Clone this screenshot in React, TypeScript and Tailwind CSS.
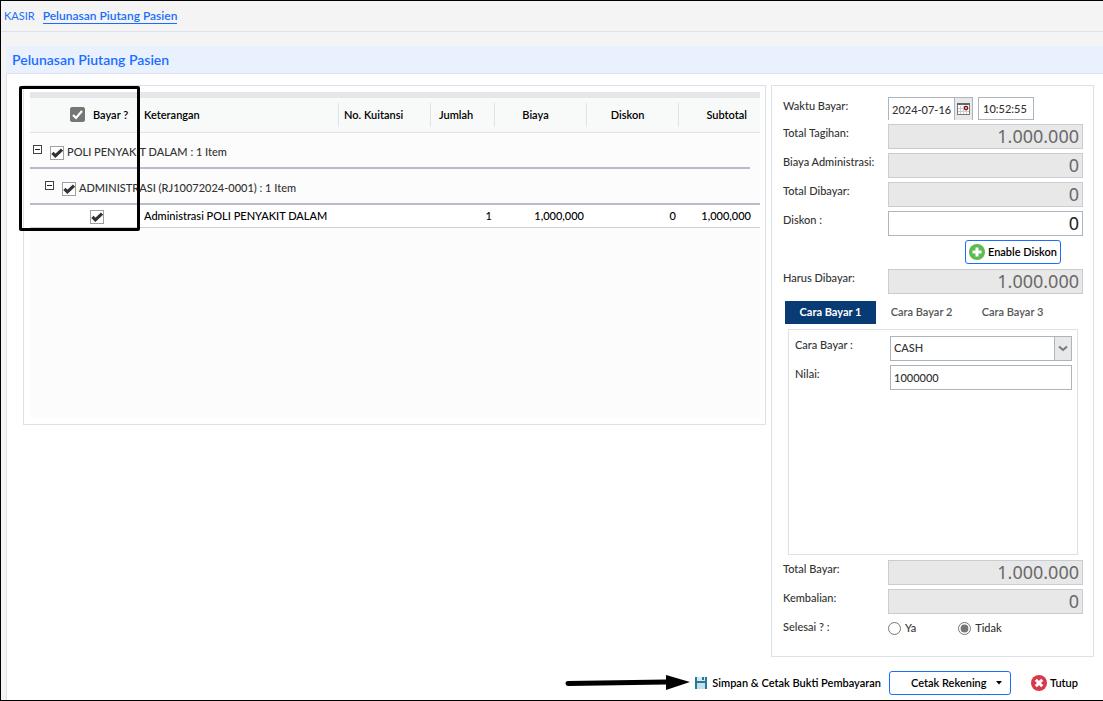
import type { ReactNode } from "react";

const totalsTop = [
  { id: "tagihan", label: "Total Tagihan:", value: "1.000.000" },
  { id: "admin", label: "Biaya Administrasi:", value: "0" },
  { id: "dibayar", label: "Total Dibayar:", value: "0" },
];

const totalsBottom = [
  { id: "bayar", label: "Total Bayar:", value: "1.000.000" },
  { id: "kembalian", label: "Kembalian:", value: "0" },
];

function GridCheckbox({ label }: { label: string }) {
  return (
    <span className="inline-grid size-[14px] shrink-0">
      <input
        type="checkbox"
        defaultChecked
        aria-label={label}
        className="peer size-[14px] appearance-none border border-[#a0a0a0] bg-white [grid-area:1/1]"
      />
      <svg viewBox="0 0 14 14" className="pointer-events-none hidden size-[14px] peer-checked:block [grid-area:1/1]">
        <path d="M2.4 6.8 5.4 9.8 12 3.6" fill="none" stroke="#333" strokeWidth="3.2" />
      </svg>
    </span>
  );
}

function HeaderCheckbox() {
  return (
    <span className="inline-grid size-[15px] shrink-0">
      <input
        id="bayar-semua"
        type="checkbox"
        defaultChecked
        className="peer size-[15px] appearance-none rounded-[2px] border border-[#767676] checked:bg-[#767676] [grid-area:1/1]"
      />
      <svg viewBox="0 0 15 15" className="pointer-events-none hidden size-[15px] peer-checked:block [grid-area:1/1]">
        <path d="M3 8 6 11 12 4" fill="none" stroke="#fff" strokeWidth="2.2" />
      </svg>
    </span>
  );
}

function CollapseButton() {
  return (
    <button type="button" aria-label="Tutup grup" className="mb-1.5 size-[9px] shrink-0">
      <svg viewBox="0 0 9 9" className="size-[9px]">
        <rect x="0.5" y="0.5" width="8" height="8" fill="#fff" stroke="#444" />
        <path d="M2 4.5h5" stroke="#222" />
      </svg>
    </button>
  );
}

function Row({ label, htmlFor, children }: { label: string; htmlFor?: string; children: ReactNode }) {
  return (
    <div className="flex items-start">
      <label htmlFor={htmlFor} className="w-[105px] shrink-0 leading-[18px] font-medium whitespace-nowrap">
        {label}
      </label>
      {children}
    </div>
  );
}

function TotalRow({ id, label, value }: { id: string; label: string; value: string }) {
  return (
    <Row label={label} htmlFor={id}>
      <input
        id={id}
        disabled
        defaultValue={value}
        className="h-[25px] min-w-0 flex-1 border border-[#c9cdd1] bg-[#e8e8e8] px-[3px] text-right font-['Noto_Sans',sans-serif] text-[18px] text-[#6a6a6a]"
      />
    </Row>
  );
}

function CalendarIcon() {
  return (
    <svg viewBox="0 0 13 12" className="h-3 w-[13px]">
      <rect x="0.5" y="0.5" width="12" height="11" fill="#fff" stroke="#777" />
      <path d="M0 1h13" stroke="#666" strokeWidth="2" />
      <path d="M1 5.5h11M1 8.5h11M3.5 3v8M6.5 3v8M9.5 3v8" stroke="#ccc" />
      <rect x="7.5" y="3.5" width="3" height="3" rx="1" fill="#fff" stroke="#8b0d18" strokeWidth="1.3" />
    </svg>
  );
}

function ItemTable() {
  return (
    <section className="min-w-0 flex-1 border border-[#dfe1ea] py-[6px] pr-[5px] pl-[6px]">
      <div className="h-[6px] bg-[#e5e6ea]" />
      <div className="min-h-[320px] bg-[#fcfcfc]">
        <table className="w-full table-fixed border-collapse text-black">
          <colgroup>
            <col className="w-[109px]" />
            <col />
            <col className="w-[92px]" />
            <col className="w-16" />
            <col className="w-[92px]" />
            <col className="w-[92px]" />
            <col className="w-[82px]" />
          </colgroup>
          <thead>
            <tr className="h-[34px] border-b border-[#dfe3ee] bg-[#f8faf9] whitespace-nowrap">
              <th className="p-0 pl-10 font-semibold">
                <span className="flex items-center gap-2">
                  <HeaderCheckbox />
                  <label htmlFor="bayar-semua">Bayar ?</label>
                </span>
              </th>
              <th className="p-0 pl-[5px] text-left font-semibold">Keterangan</th>
              <th className="p-0">
                <div className="flex h-6 items-center border-l border-[#dfe3ee] pl-[5px] font-semibold">No. Kuitansi</div>
              </th>
              <th className="p-0">
                <div className="flex h-6 items-center border-l border-[#dfe3ee] pl-2 font-semibold">Jumlah</div>
              </th>
              <th className="p-0">
                <div className="flex h-6 items-center justify-center border-l border-[#dfe3ee] pr-[10px] font-semibold">Biaya</div>
              </th>
              <th className="p-0">
                <div className="flex h-6 items-center justify-center border-l border-[#dfe3ee] pr-[10px] font-semibold">Diskon</div>
              </th>
              <th className="p-0">
                <div className="flex h-6 items-center justify-end border-l border-[#dfe3ee] pr-[13px] font-semibold">Subtotal</div>
              </th>
            </tr>
          </thead>
          <tbody>
            <tr>
              <td colSpan={7} className="p-0">
                <div className="mr-[10px] flex h-9 items-center gap-2 border-b-2 border-[#b8bec7] pt-1.5 pl-[3px]">
                  <CollapseButton />
                  <span className="flex items-center gap-[3px] font-medium text-[#333]">
                    <GridCheckbox label="POLI PENYAKIT DALAM" />
                    POLI PENYAKIT DALAM : 1 Item
                  </span>
                </div>
              </td>
            </tr>
            <tr>
              <td colSpan={7} className="p-0">
                <div className="flex h-9 items-center gap-2 border-b-2 border-[#b8bec7] pt-1.5 pl-[15px]">
                  <CollapseButton />
                  <span className="flex items-center gap-[3px] font-medium text-[#333]">
                    <GridCheckbox label="ADMINISTRASI" />
                    ADMINISTRASI (RJ10072024-0001) : 1 Item
                  </span>
                </div>
              </td>
            </tr>
            <tr className="h-[23px] border-b border-[#d0d0d4] bg-white font-medium whitespace-nowrap">
              <td className="p-0">
                <span className="flex justify-center pt-[3px] pl-[25px]">
                  <GridCheckbox label="Administrasi POLI PENYAKIT DALAM" />
                </span>
              </td>
              <td className="p-0 pl-[5px]">Administrasi POLI PENYAKIT DALAM</td>
              <td />
              <td className="p-0 pr-[2px] text-right">1</td>
              <td className="p-0 pr-[2px] text-right">1,000,000</td>
              <td className="p-0 pr-[2px] text-right">0</td>
              <td className="p-0 pr-[9px] text-right">1,000,000</td>
            </tr>
          </tbody>
        </table>
      </div>
    </section>
  );
}

function PaymentPanel() {
  return (
    <section className="w-[323px] shrink-0 border border-[#dfe1ea] pt-[11px] pr-[10px] pb-[19px] pl-[11px] text-[#333]">
      <div className="flex flex-col gap-1">
        <Row label="Waktu Bayar:" htmlFor="tanggal">
          <input
            id="tanggal"
            defaultValue="2024-07-16"
            className="h-[23px] w-[67px] border border-b-0 border-[#acb5be] px-[3px] font-medium"
          />
          <button
            type="button"
            aria-label="Pilih tanggal"
            className="flex h-[23px] w-[18px] items-center justify-center border border-b-0 border-l-0 border-[#acb5be] bg-[#e8e8e8]"
          >
            <CalendarIcon />
          </button>
          <input
            aria-label="Jam"
            defaultValue="10:52:55"
            className="ml-[5px] h-[23px] w-14 border border-[#acb5be] px-1 font-medium"
          />
        </Row>
        {totalsTop.map((t) => (
          <TotalRow key={t.id} {...t} />
        ))}
        <Row label="Diskon :" htmlFor="diskon">
          <input
            id="diskon"
            defaultValue="0"
            className="h-[25px] min-w-0 flex-1 border border-[#acb5be] px-[3px] text-right font-['Noto_Sans',sans-serif] text-[18px] text-[#222]"
          />
        </Row>
        <div className="flex justify-end pr-[22px] pb-[1px]">
          <button
            type="button"
            className="flex h-6 items-center gap-[3px] rounded-[3px] border border-[#1a6dff] px-[3px] font-semibold whitespace-nowrap text-black"
          >
            <svg viewBox="0 0 16 16" className="size-4">
              <circle cx="8" cy="8" r="8" fill="#5dbb50" />
              <path d="M8 3.5v9M3.5 8h9" stroke="#fff" strokeWidth="3" />
            </svg>
            Enable Diskon
          </button>
        </div>
        <TotalRow id="harus" label="Harus Dibayar:" value="1.000.000" />
      </div>

      <div role="tablist" className="mt-[7px] ml-[2px] flex h-[23px] font-semibold text-[#555]">
        <button type="button" role="tab" aria-selected="true" className="w-[91px] bg-[#083a73] font-bold text-white">
          Cara Bayar 1
        </button>
        <button type="button" role="tab" aria-selected="false" className="w-[91px]">
          Cara Bayar 2
        </button>
        <button type="button" role="tab" aria-selected="false" className="w-[91px]">
          Cara Bayar 3
        </button>
      </div>
      <div className="m-[5px] flex h-[226px] flex-col gap-1 border border-[#dfe1ea] py-[6px] pr-[5px] pl-[6px]">
        <div className="flex items-start">
          <label htmlFor="cara" className="w-[95px] leading-[18px] font-medium">
            Cara Bayar :
          </label>
          <div className="grid min-w-0 flex-1">
            <select
              id="cara"
              className="h-[25px] w-full appearance-none border border-[#acb5be] bg-white px-[3px] font-medium [grid-area:1/1]"
            >
              <option>CASH</option>
            </select>
            <span className="pointer-events-none flex h-[25px] w-[18px] items-center justify-center justify-self-end border border-[#acb5be] bg-[#e8e8e8] [grid-area:1/1]">
              <svg viewBox="0 0 10 7" className="h-[7px] w-[10px]">
                <path d="M1 1.5 5 5l4-3.5" fill="none" stroke="#777" strokeWidth="2" />
              </svg>
            </span>
          </div>
        </div>
        <div className="flex items-start">
          <label htmlFor="nilai" className="w-[95px] leading-[18px] font-medium">
            Nilai:
          </label>
          <input
            id="nilai"
            defaultValue="1000000"
            className="h-[25px] min-w-0 flex-1 border border-[#acb5be] px-[3px] font-medium"
          />
        </div>
      </div>

      <div className="flex flex-col gap-1">
        {totalsBottom.map((t) => (
          <TotalRow key={t.id} {...t} />
        ))}
        <Row label="Selesai ? :">
          <div className="flex gap-[42px] pt-px font-medium">
            <label className="flex items-center gap-1 leading-[18px]">
              <input type="radio" name="selesai" className="size-[13px] accent-[#767676]" />
              Ya
            </label>
            <label className="flex items-center gap-1 leading-[18px]">
              <input type="radio" name="selesai" defaultChecked className="size-[13px] accent-[#767676]" />
              Tidak
            </label>
          </div>
        </Row>
      </div>
    </section>
  );
}

function ActionBar() {
  return (
    <div className="flex h-6 items-center justify-end pr-4 font-semibold whitespace-nowrap text-black">
      {/* Arrow pointing at the save button */}
      <svg viewBox="0 0 126 18" className="mr-1 h-[18px] w-[126px]">
        <path d="M3 9.500 101 8" stroke="#000" strokeWidth="5" strokeLinecap="round" />
        <path d="M101 1 125 8l-24 8z" fill="#000" />
      </svg>
      <button type="button" className="flex items-center gap-[5px]">
        <svg viewBox="0 0 12 12" className="size-3">
          <path d="M0 0h12v12H0z" fill="#2c7798" />
          <path d="M2 0h8v4H2z" fill="#d6eaf2" />
          <path d="M7 0h2v3H7z" fill="#2c7798" />
          <path d="M2 6h8v6H2z" fill="#bfe0ec" />
        </svg>
        Simpan &amp; Cetak Bukti Pembayaran
      </button>
      <button
        type="button"
        className="ml-2 flex h-6 w-[122px] items-center gap-[9px] rounded-[3px] border border-[#1a6dff] pl-[21px]"
      >
        Cetak Rekening
        <svg viewBox="0 0 6 4" className="h-1 w-[6px]">
          <path d="M0 0h6L3 3.500z" />
        </svg>
      </button>
      <button type="button" className="ml-5 flex items-center gap-[3px]">
        <svg viewBox="0 0 16 16" className="size-4">
          <circle cx="8" cy="8" r="8" fill="#d9394a" />
          <path d="m4.800 4.800 6.400 6.400M11.200 4.800l-6.400 6.400" stroke="#fff" strokeWidth="3" />
        </svg>
        Tutup
      </button>
    </div>
  );
}

export default function App() {
  return (
    <div className="relative flex min-h-screen flex-col border-y border-l border-black bg-[#f4f4f4] font-['Lato','Noto_Sans',sans-serif] text-[11px]">
      <nav className="flex h-[31px] items-center gap-2 border-b border-[#dfe1ea] pl-[3px] text-[#1a6dff]">
        <a href="#kasir">KASIR</a>
        <a href="#pelunasan" className="border-b border-[#1a6dff] text-[12px] leading-[14px] font-semibold">
          Pelunasan Piutang Pasien
        </a>
      </nav>

      <main className="mt-[14px] ml-[5px] flex flex-1 flex-col">
        <h1 className="flex h-[27px] items-center bg-[#e9f1ff] pl-[6px] text-[14px] font-semibold text-[#1a6dff]">
          Pelunasan Piutang Pasien
        </h1>
        <div className="flex flex-1 flex-col gap-[14px] border-t border-l border-[#dfe1ea] bg-white pt-[11px] pr-[9px] pb-[5px] pl-4">
          <div className="flex items-start gap-[5px]">
            <ItemTable />
            <PaymentPanel />
          </div>
          <ActionBar />
        </div>
      </main>

      {/* Highlight around the "Bayar ?" column */}
      <div className="pointer-events-none absolute top-[85px] left-[18px] h-[145px] w-[121px] rounded-[2px] border-[3px] border-black" />
    </div>
  );
}
